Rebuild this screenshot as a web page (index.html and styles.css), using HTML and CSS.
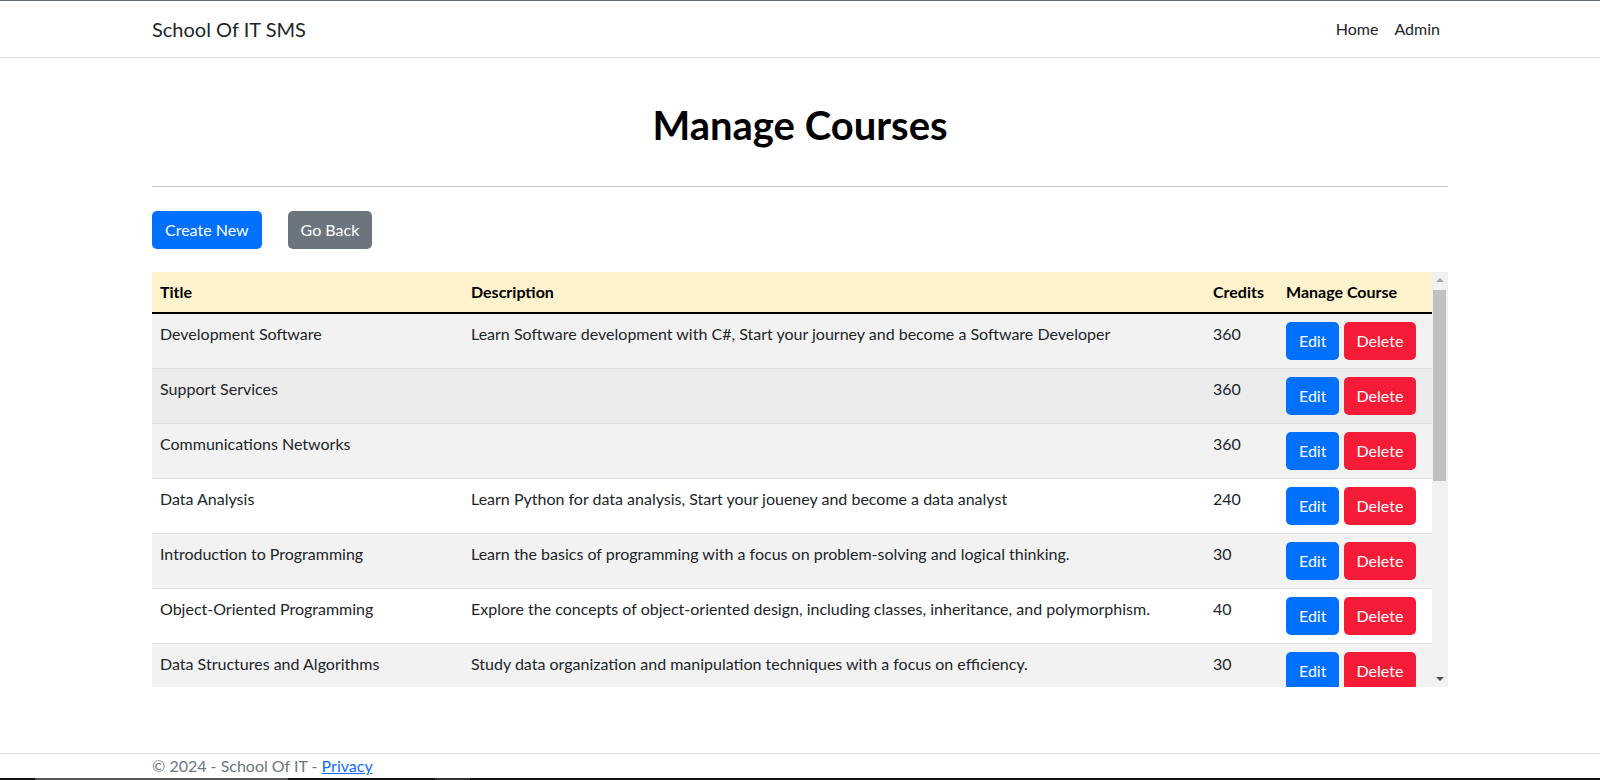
FILE: index.html
```html
<!DOCTYPE html>
<html lang="en">
<head>
<meta charset="utf-8">
<title>Manage Courses - School Of IT SMS</title>
<link rel="stylesheet" href="styles.css">
</head>
<body>
<header class="site-header">
  <nav class="navbar">
    <div class="container nav-inner">
      <a class="brand" href="#">School Of IT SMS</a>
      <ul class="nav-links">
        <li><a class="nav-link" href="#">Home</a></li>
        <li><a class="nav-link" href="#">Admin</a></li>
      </ul>
    </div>
  </nav>
</header>

<main class="container main">
  <h1 class="page-title">Manage Courses</h1>
  <hr class="divider">
  <div class="actions">
    <a class="btn btn-primary" href="#">Create New</a>
    <a class="btn btn-secondary" href="#">Go Back</a>
  </div>

  <div class="table-frame">
    <div class="table-scroll">
      <table class="table">
        <thead>
          <tr>
            <th class="col-title">Title</th>
            <th class="col-desc">Description</th>
            <th class="col-credits">Credits</th>
            <th class="col-manage">Manage Course</th>
          </tr>
        </thead>
        <tbody>
          <tr>
            <td>Development Software</td>
            <td>Learn Software development with C#, Start your journey and become a Software Developer</td>
            <td>360</td>
            <td class="manage"><a class="btn btn-primary" href="#">Edit</a> <a class="btn btn-danger" href="#">Delete</a></td>
          </tr>
          <tr class="hovered">
            <td>Support Services</td>
            <td></td>
            <td>360</td>
            <td class="manage"><a class="btn btn-primary" href="#">Edit</a> <a class="btn btn-danger" href="#">Delete</a></td>
          </tr>
          <tr>
            <td>Communications Networks</td>
            <td></td>
            <td>360</td>
            <td class="manage"><a class="btn btn-primary" href="#">Edit</a> <a class="btn btn-danger" href="#">Delete</a></td>
          </tr>
          <tr>
            <td>Data Analysis</td>
            <td>Learn Python for data analysis, Start your joueney and become a data analyst</td>
            <td>240</td>
            <td class="manage"><a class="btn btn-primary" href="#">Edit</a> <a class="btn btn-danger" href="#">Delete</a></td>
          </tr>
          <tr>
            <td>Introduction to Programming</td>
            <td>Learn the basics of programming with a focus on problem-solving and logical thinking.</td>
            <td>30</td>
            <td class="manage"><a class="btn btn-primary" href="#">Edit</a> <a class="btn btn-danger" href="#">Delete</a></td>
          </tr>
          <tr>
            <td>Object-Oriented Programming</td>
            <td>Explore the concepts of object-oriented design, including classes, inheritance, and polymorphism.</td>
            <td>40</td>
            <td class="manage"><a class="btn btn-primary" href="#">Edit</a> <a class="btn btn-danger" href="#">Delete</a></td>
          </tr>
          <tr>
            <td>Data Structures and Algorithms</td>
            <td>Study data organization and manipulation techniques with a focus on efficiency.</td>
            <td>30</td>
            <td class="manage"><a class="btn btn-primary" href="#">Edit</a> <a class="btn btn-danger" href="#">Delete</a></td>
          </tr>
        </tbody>
      </table>
    </div>
    <div class="scrollbar" aria-hidden="true">
      <div class="sb-btn sb-up"></div>
      <div class="sb-track"><div class="sb-thumb"></div></div>
      <div class="sb-btn sb-down"></div>
    </div>
  </div>
</main>

<footer class="footer">
  <div class="container">&copy; 2024 - School Of IT - <a class="privacy" href="#">Privacy</a></div>
</footer>
<div class="taskbar-edge"></div>
</body>
</html>
```

FILE: styles.css
```css
html, body {
  margin: 0;
  padding: 0;
}
body {
  font-family: "Segoe UI", Lato, "Liberation Sans", sans-serif;
  font-size: 16px;
  line-height: 1.5;
  color: #212529;
  background: #fff;
  overflow: hidden;
  height: 780px;
}
a { text-decoration: none; }

.container {
  width: 1296px;
  margin: 0 auto;
}

/* Navbar */
.site-header {
  border-top: 1px solid #5e6f77;
}
.navbar {
  border-bottom: 1px solid #dee2e6;
  box-sizing: border-box;
  height: 57px;
}
.nav-inner {
  height: 56px;
  display: flex;
  align-items: center;
  justify-content: space-between;
}
.brand {
  font-size: 20px;
  color: #212529;
  line-height: 30px;
}
.nav-links {
  list-style: none;
  margin: 0;
  padding: 0;
  display: flex;
}
.nav-link {
  display: block;
  padding: 8px 8px;
  color: #212529;
}

/* Main */
.main {
  padding-top: 43px;
}
.page-title {
  margin: 0;
  text-align: center;
  font-size: 40px;
  line-height: 48px;
  font-weight: 700;
  color: #000;
}
.divider {
  margin: 37px 0 0;
  border: 0;
  border-top: 1px solid #c8c8c8;
}
.actions {
  margin-top: 24px;
  display: flex;
  gap: 26px;
}
.btn {
  display: inline-block;
  padding: 6px 12px;
  font-size: 16px;
  line-height: 24px;
  border-radius: 5px;
  color: #fff;
  border: 1px solid transparent;
}
.btn-primary { background: #0070ff; }
.btn-secondary { background: #6c757d; }
.btn-danger { background: #f61b37; }

/* Table with scrollbar */
.table-frame {
  margin-top: 23px;
  height: 415px;
  display: flex;
}
.table-scroll {
  flex: 1;
  overflow: hidden;
}
.scrollbar {
  width: 16px;
  background: #f1f1f1;
  display: flex;
  flex-direction: column;
}
.sb-btn {
  height: 16px;
  display: flex;
  align-items: center;
  justify-content: center;
}
.sb-up::before {
  content: "";
  border-left: 4px solid transparent;
  border-right: 4px solid transparent;
  border-bottom: 4px solid #a3a3a3;
}
.sb-down::before {
  content: "";
  border-left: 4px solid transparent;
  border-right: 4px solid transparent;
  border-top: 4px solid #505050;
}
.sb-track {
  flex: 1;
  padding: 2px 2px 0 1px;
}
.sb-thumb {
  height: 191px;
  background: #c1c1c1;
}

.table {
  width: 100%;
  border-collapse: collapse;
  table-layout: fixed;
}
.col-title { width: 295px; }
.col-desc { width: 726px; }
.col-credits { width: 57px; }
.col-manage { width: auto; }

.table th {
  text-align: left;
  font-weight: 700;
  background: #fff3cd;
  padding: 8px;
  color: #000;
  border-bottom: 2px solid #000;
  white-space: nowrap;
}
.table td {
  padding: 8px;
  vertical-align: top;
  border-bottom: 1px solid #dee2e6;
  white-space: nowrap;
  overflow: hidden;
}
.table tbody tr:nth-child(odd) td { background: #f2f2f2; }
.table tbody tr.hovered td { background: #ececec; }

/* Footer */
.footer {
  margin-top: 66px;
  border-top: 1px solid #dee2e6;
  line-height: 24px;
  color: #6c757d;
  white-space: nowrap;
}
.privacy {
  color: #0d6efd;
  text-decoration: underline;
}
.taskbar-edge {
  position: fixed;
  left: 0;
  right: 0;
  bottom: 0;
  height: 2px;
  background: linear-gradient(to right, #111 35px, #555 35px, #555 288px, #111 288px, #111 435px, #333 435px, #333 470px, #111 470px);
}
```
